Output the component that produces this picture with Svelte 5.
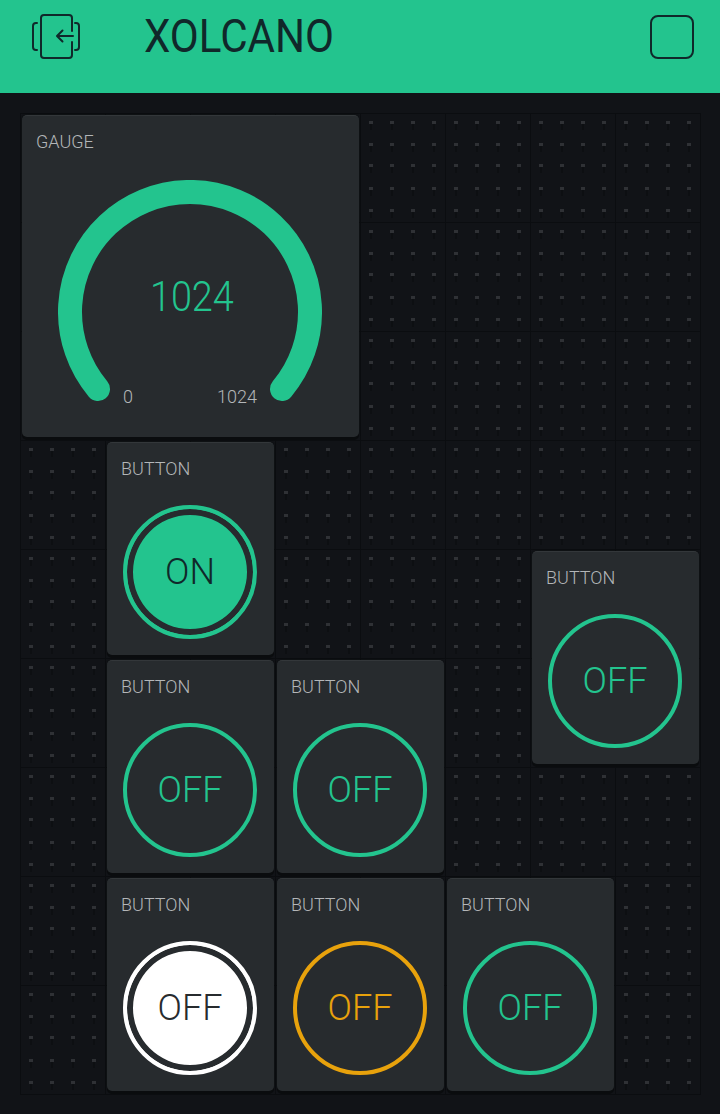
<script>
	const buttons = [
		{ col: 2, row: 4, label: 'ON', kind: 'on' },
		{ col: 7, row: 5, label: 'OFF', kind: 'off' },
		{ col: 2, row: 6, label: 'OFF', kind: 'off' },
		{ col: 4, row: 6, label: 'OFF', kind: 'off' },
		{ col: 2, row: 8, label: 'OFF', kind: 'white' },
		{ col: 4, row: 8, label: 'OFF', kind: 'amber' },
		{ col: 6, row: 8, label: 'OFF', kind: 'off' }
	];
	const dotX = [9, 30, 51, 72];
	const dotY = [8, 30, 51, 74, 96];
</script>

<div class="screen">
	<header class="topbar">
		<svg class="back" width="48" height="46" viewBox="0 0 48 46" fill="none" stroke="#10282a" stroke-width="2" stroke-linecap="round" stroke-linejoin="round">
			<path d="M40 17V4a3 3 0 0 0-3-3H12a3 3 0 0 0-3 3v37a3 3 0 0 0 3 3h25a3 3 0 0 0 3-3V28" />
			<path d="M5 9H4a3 3 0 0 0-3 3v21a3 3 0 0 0 3 3h1" />
			<path d="M43 9h1a3 3 0 0 1 3 3v21a3 3 0 0 1-3 3h-1" />
			<path d="M41 22H25.500M30.500 16.500l-5.500 5.500 5.500 5.500" />
		</svg>
		<h1>XOLCANO</h1>
		<span class="square"></span>
	</header>

	<main class="board">
		<svg class="dots" width="681" height="982" aria-hidden="true">
			<defs>
				<pattern id="cell" width="85" height="109" patternUnits="userSpaceOnUse">
					<path d="M0 .5H85M.5 0V109" stroke="#0b0d10" fill="none" />
					{#each dotX as x}
						{#each dotY as y}
							<rect x={x + 1} y={y + 3} width="2" height="6" fill="#0d0f12" />
							<rect {x} {y} width="4" height="3" fill="#2f3135" />
						{/each}
					{/each}
				</pattern>
			</defs>
			<rect width="681" height="982" fill="url(#cell)" />
			<path d="M680.500 0V981.500H0" stroke="#0b0d10" fill="none" />
		</svg>

		<section class="card gauge">
			<div class="title">GAUGE</div>
			<svg class="dial" width="264" height="232" viewBox="0 0 264 232" fill="none">
				<path d="M40 209A120 120 0 1 1 224 209" stroke="#23c48e" stroke-width="24" stroke-linecap="round" />
			</svg>
			<div class="reading">1024</div>
			<div class="limit min">0</div>
			<div class="limit max">1024</div>
		</section>

		{#each buttons as b}
			<section class="card button" style="grid-column: {b.col} / span 2; grid-row: {b.row} / span 2">
				<div class="title">BUTTON</div>
				<div class="ring {b.kind}"><span>{b.label}</span></div>
			</section>
		{/each}
	</main>
</div>

<style>
	:global(body) {
		margin: 0;
		background: #111317;
	}
	.screen {
		width: 720px;
		height: 1114px;
		overflow: hidden;
		background: #111317;
		font-family: Roboto, 'Liberation Sans', sans-serif;
	}
	.topbar {
		height: 93px;
		background: #23c48e;
		display: flex;
		align-items: flex-start;
		color: #10282a;
	}
	.back {
		margin: 14px 0 0 32px;
	}
	h1 {
		margin: 9px 0 0 64px;
		font-size: 46px;
		line-height: 54px;
		font-weight: 400;
		flex: 1;
		transform: scaleX(0.915);
		transform-origin: left center;
	}
	.square {
		width: 40px;
		height: 40px;
		margin: 15px 26px 0 0;
		border: 2px solid #10282a;
		border-radius: 8px;
	}
	.board {
		position: relative;
		display: grid;
		grid-template-columns: repeat(8, 85px);
		grid-template-rows: repeat(9, 109px);
		width: 680px;
		height: 981px;
		margin: 20px 0 0 20px;
	}
	.dots {
		position: absolute;
		left: 0;
		top: 0;
	}
	.card {
		position: relative;
		margin: 2px 1px 3px 2px;
		background: #272b2e;
		border-radius: 5px;
		border-top: 1px solid #33373a;
		box-shadow: 0 3px 0 #0a0c0e, 0 0 2px #0a0c0e;
	}
	.title {
		color: #b3b6b8;
		font-size: 18px;
		font-weight: 300;
		line-height: 22px;
		padding: 15px 0 0 14px;
	}
	.gauge {
		grid-column: 1 / span 4;
		grid-row: 1 / span 3;
	}
	.dial {
		position: absolute;
		left: 36px;
		top: 64px;
	}
	.reading {
		position: absolute;
		left: 0;
		right: 0;
		top: 156px;
		text-align: center;
		color: #23c48e;
		font-size: 42px;
		line-height: 50px;
		font-weight: 300;
		padding-left: 3px;
		transform: scaleX(0.9);
	}
	.limit {
		position: absolute;
		top: 270px;
		color: #b3b6b8;
		font-size: 18px;
		font-weight: 300;
		line-height: 22px;
	}
	.min {
		left: 101px;
	}
	.max {
		left: 195px;
	}
	.ring {
		box-sizing: border-box;
		width: 134px;
		height: 134px;
		margin: 25px 0 0 16px;
		border-radius: 50%;
		border: 4px solid #23c48e;
		display: flex;
		align-items: center;
		justify-content: center;
		color: #23c48e;
		font-size: 36px;
		font-weight: 300;
	}
	.ring.on,
	.ring.white {
		background: #23c48e;
		box-shadow: inset 0 0 0 6px #272b2e;
		color: #10282a;
	}
	.ring.white {
		background: #fff;
		border-color: #fff;
		color: #272b2e;
	}
	.ring.amber {
		border-color: #e8a20c;
		color: #e8a20c;
	}
</style>
